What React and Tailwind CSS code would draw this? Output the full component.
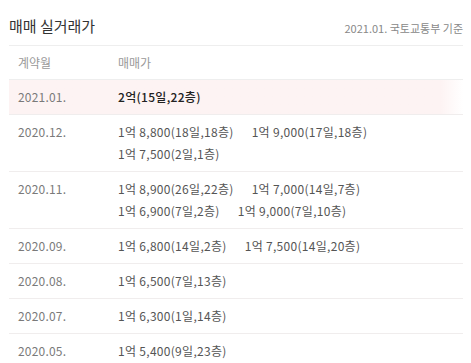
import React from "react";

const rows = [
  { m: "2021.01.", items: ["2억(15일,22층)"], hl: true },
  { m: "2020.12.", items: ["1억 8,800(18일,18층)", "1억 9,000(17일,18층)", "1억 7,500(2일,1층)"] },
  { m: "2020.11.", items: ["1억 8,900(26일,22층)", "1억 7,000(14일,7층)", "1억 6,900(7일,2층)", "1억 9,000(7일,10층)"] },
  { m: "2020.09.", items: ["1억 6,800(14일,2층)", "1억 7,500(14일,20층)"] },
  { m: "2020.08.", items: ["1억 6,500(7일,13층)"] },
  { m: "2020.07.", items: ["1억 6,300(1일,14층)"] },
  { m: "2020.05.", items: ["1억 5,400(9일,23층)"] },
];

export default function App() {
  return (
    <div
      className="w-[471px] h-[363px] overflow-hidden bg-white pl-[9px] pr-[8px]"
      style={{ fontFamily: '"Noto Sans CJK KR", "Noto Sans", sans-serif' }}
    >
      <div className="flex items-end justify-between h-[45px] pb-[9px]">
        <div className="text-[15px] leading-[20px] text-[#333]">매매 실거래가</div>
        <div className="text-[11px] leading-[16px] text-[#888]">2021.01. 국토교통부 기준</div>
      </div>
      <div className="border-t border-[#eeeeee]">
        <div className="flex h-[34px] items-center border-b border-[#eeeeee] text-[12px] text-[#999]">
          <div className="w-[109px] pl-[9px]">계약월</div>
          <div>매매가</div>
        </div>
        {rows.map((r) => (
          <div
            key={r.m}
            className={`flex py-[6px] border-b border-[#f0eded] text-[12px] leading-[22px] ${
              r.hl ? "bg-gradient-to-r from-[#fdf3f3] from-95% to-white" : ""
            }`}
          >
            <div className="w-[109px] shrink-0 pl-[9px] text-[#7a7a7a] tracking-[0.2px]">{r.m}</div>
            <div
              className={`flex flex-wrap gap-x-[18px] tracking-[0.3px] ${
                r.hl ? "text-[#222] font-medium" : "text-[#555]"
              } w-[310px]`}
            >
              {r.items.map((it, i) => (
                <span key={i} className="whitespace-nowrap">
                  {it}
                </span>
              ))}
            </div>
          </div>
        ))}
      </div>
    </div>
  );
}
